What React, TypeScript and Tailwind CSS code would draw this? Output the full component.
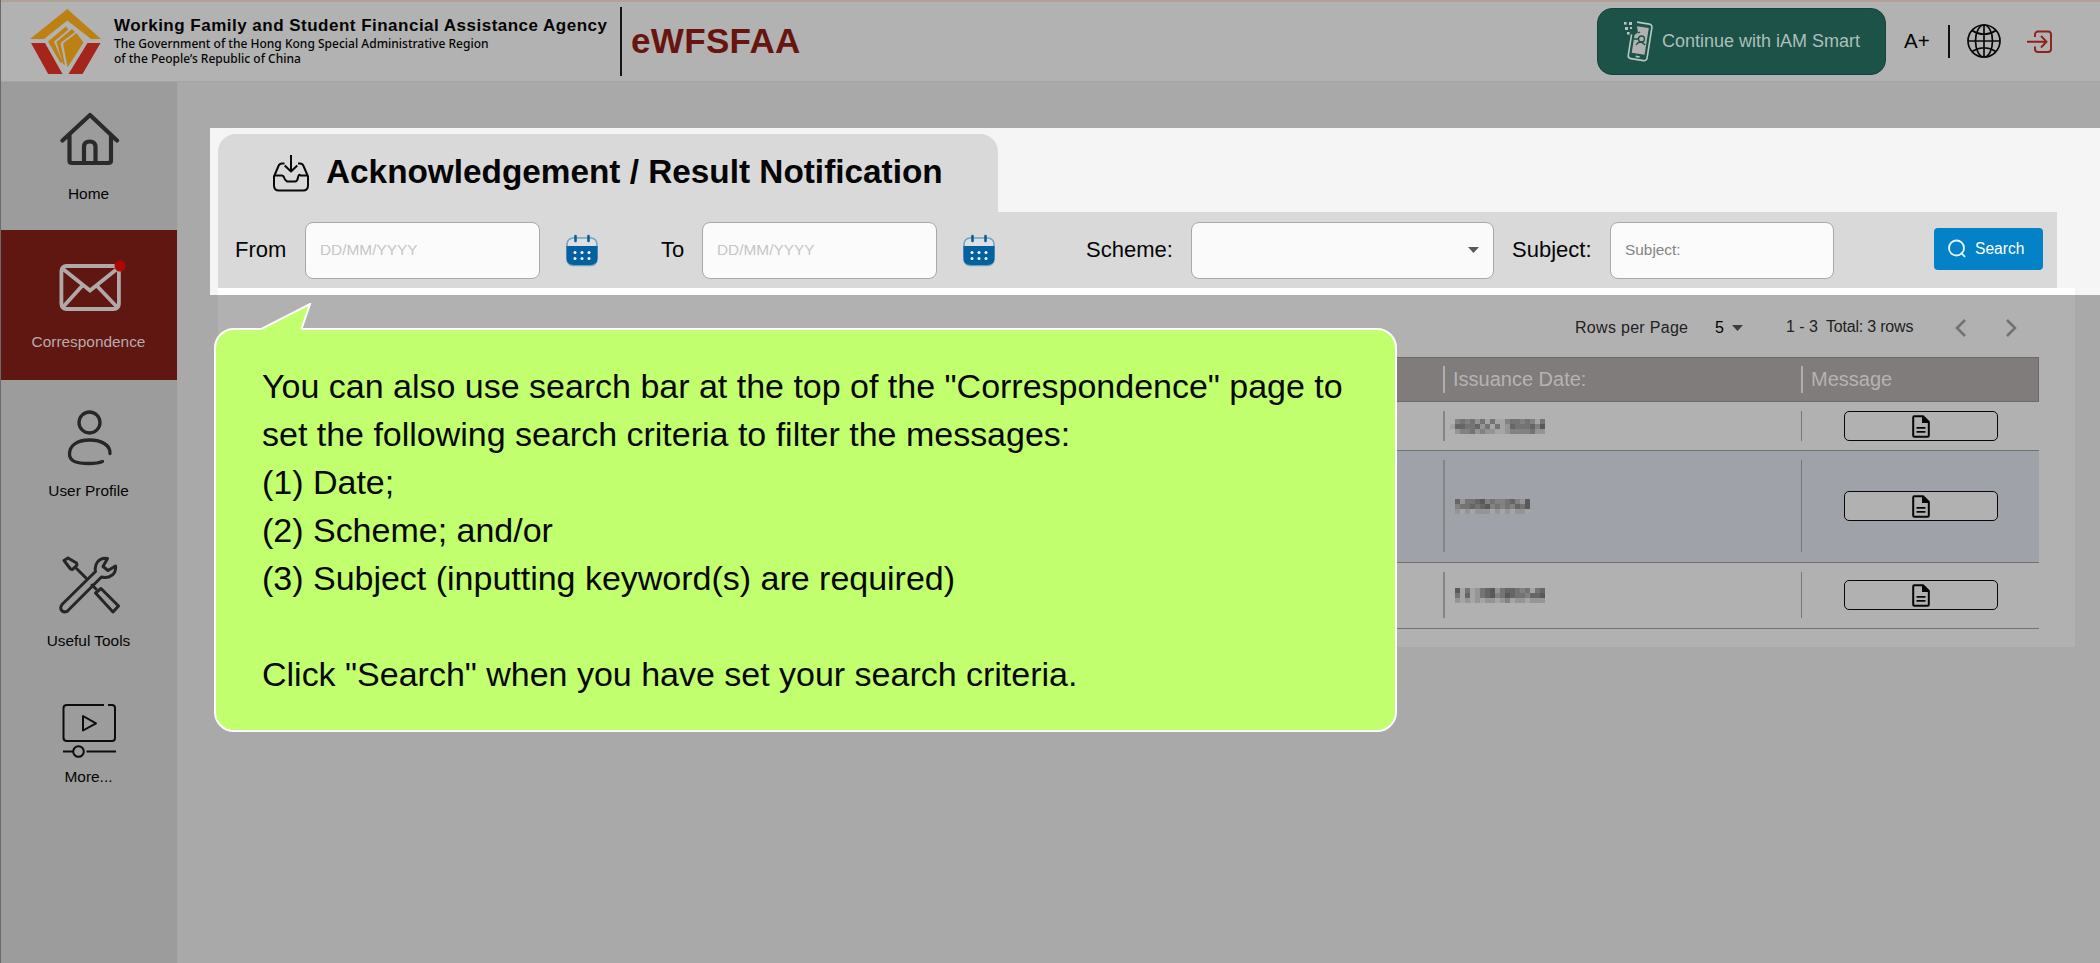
import React from "react";

function AgencyLogo() {
  return (
    <svg width="73" height="66" viewBox="0 0 73 66" className="block">
      <path d="M38.300 0 72 30H62L38.300 11.500 15 30H1Z" fill="#bd8113" />
      <path d="M2 34H16L33.500 65H19.200Z" fill="#a5241b" />
      <path d="M71.500 34H58.500L39.500 65H53.500Z" fill="#a5241b" />
      <path d="M19 32.500 37 17.500 39.500 20.500 25 32.500 33.500 53 31.500 54Z" fill="#bd8113" />
      <path d="M27.500 33 43 20 46 23 31.500 34 36 56 34 55Z" fill="#bd8113" />
      <path d="M34 34.500 47.500 24 54.500 33.500 38.500 58.500Z" fill="#bd8113" />
    </svg>
  );
}

function PhoneIcon() {
  return (
    <svg width="30" height="42" viewBox="0 0 30 42" className="block shrink-0" fill="none" stroke="#b4c8c1" strokeWidth="1.600">
      <g transform="rotate(9 18 21)">
        <path d="M11 2H23.500a3 3 0 0 1 3 3V36a3 3 0 0 1-3 3H10.500a3 3 0 0 1-3-3V15" />
        <path d="M11.500 6H23.500V33H10.500V15l3-3z" fill="#b2b2b2" stroke="none" />
        <path d="M15 36H19" />
      </g>
      <g stroke="#1c5045" strokeWidth="1.300">
        <circle cx="18.500" cy="18" r="3" />
        <path d="M13 24q4-6 9 0M11 18h4M15 12l2-1" />
      </g>
      <g fill="#b4c8c1" stroke="none">
        <rect x="1" y="1" width="2.600" height="2.600" />
        <rect x="6" y="1" width="3" height="3" />
        <rect x="2" y="6" width="3" height="3" />
        <rect x="7" y="6" width="2" height="2" />
        <rect x="4" y="11" width="2.600" height="2.600" />
      </g>
    </svg>
  );
}

function GlobeIcon() {
  return (
    <svg width="34" height="34" viewBox="0 0 34 34" className="block" fill="none" stroke="#080808" strokeWidth="1.700">
      <circle cx="17" cy="17" r="16" />
      <ellipse cx="17" cy="17" rx="8.500" ry="16" />
      <path d="M17 1V33M1 17H33M5 6.500Q17 14 29 6.500M5 27.500Q17 20 29 27.500" />
    </svg>
  );
}

function LogoutIcon() {
  return (
    <svg width="26" height="24" viewBox="0 0 26 24" className="block" fill="none" stroke="#8d211b" strokeWidth="1.900">
      <path d="M8 7V4.500A3 3 0 0 1 11 1.500H21A3 3 0 0 1 24 4.500V19A3 3 0 0 1 21 22H11A3 3 0 0 1 8 19V16.500" />
      <path d="M0 11.700H19M14 6 19.500 11.700 14 17.500" />
    </svg>
  );
}

function HomeIcon() {
  return (
    <svg width="60" height="54" viewBox="0 0 60 54" className="block" fill="none" stroke="#2a2a2a" strokeWidth="4.200" strokeLinejoin="round" strokeLinecap="round">
      <path d="M2.500 28.500 30 3 57 28.500M9.500 23V48.500Q9.500 51 12 51H48Q51 51 51 48.500V23" />
      <path d="M24 51V35Q24 29.500 29.700 29.500T35.500 35V51" />
    </svg>
  );
}

function MailIcon() {
  return (
    <svg width="62" height="52" viewBox="0 0 62 52" className="block overflow-visible" fill="none" stroke="#b1a9a9" strokeWidth="3.800">
      <rect x="2.400" y="6" width="57.500" height="43" rx="5" />
      <path d="M4 9 31 30.500 58 9M4 47 23 26M58 47 38 26" />
      <circle cx="61" cy="6" r="5.500" fill="#b00606" stroke="none" />
    </svg>
  );
}

function ProfileIcon() {
  return (
    <svg width="46" height="56" viewBox="0 0 46 56" className="block" fill="none" stroke="#262626" strokeWidth="3.300" strokeLinecap="round">
      <circle cx="22.500" cy="12.500" r="10.500" />
      <path d="M43 43.500C43.500 35.500 35 30 22.500 30 9.500 30 2.500 36 2.500 44 2.500 51 8.500 53.500 22 53.500 28 53.500 32 53 35.500 51.500" />
    </svg>
  );
}

function ToolsIcon() {
  return (
    <svg width="61" height="58" viewBox="0 0 61 58" className="block" fill="none" stroke="#262626" strokeWidth="3" strokeLinejoin="round" strokeLinecap="round">
      <path d="M48.500 2.500C40 1 35 8 36.500 15.500L3 48.500C0 53 3 57 8 55.500L42.500 21C50.500 23 57.500 18 56.500 10L49 14.500 44 10.500Z" />
      <path d="M5 4.500 9 2 17.500 7 18 9 13.500 13.500 11.500 13Z M16 11 27 22M33 29 37 33" />
      <path d="M36.500 37 42 32.500 59.500 50 54 56Z" />
    </svg>
  );
}

function VideoIcon() {
  return (
    <svg width="55" height="56" viewBox="0 0 55 56" className="block" fill="none" stroke="#0c0c0c" strokeWidth="2" strokeLinejoin="round">
      <path d="M42 2H5Q1.500 2 1.500 5V35Q1.500 38 5 38H50Q53 38 53 35V5Q53 2 50 2H46" />
      <path d="M21 13V27.500L34 20.300ZM1 48.500H11M24.500 48.500H54" />
      <circle cx="16.500" cy="48.500" r="5.300" />
    </svg>
  );
}

function InboxIcon() {
  return (
    <svg width="38" height="37" viewBox="0 0 38 37" className="block" fill="none" stroke="#080808" strokeWidth="2" strokeLinejoin="round">
      <path d="M12.500 8.500H10Q7.500 8.500 6.500 11L2 21.500V30.500Q2 35.500 7 35.500H31Q36 35.500 36 30.500V21.500L31.500 11Q30.500 8.500 28 8.500H26" />
      <path d="M2 20.500H9.500Q11.500 20.500 12 22.500T15 26.500H23Q25.300 26.500 26 22.500T28.500 20.500H36M19 0V16M12.700 10.500 19 16.500 25.300 10.500" />
    </svg>
  );
}

function CalendarIcon() {
  return (
    <svg width="32" height="33" viewBox="0 0 32 33" className="block">
      <rect x="1" y="4" width="30" height="27.500" rx="6" fill="#dce0e2" stroke="#6fa3c2" strokeWidth="1.600" />
      <path d="M0.500 12H31.500V24Q31.500 31 24.500 31H7.500Q.5 31 .5 24Z" fill="#04609f" />
      <path d="M9.500 2V7M22.500 2V7" stroke="#0d5d94" strokeWidth="2.600" strokeLinecap="round" />
      <g fill="#f0f5f8">
        <circle cx="9" cy="18.500" r="1.500" /><circle cx="16" cy="18.500" r="1.500" /><circle cx="23" cy="18.500" r="1.500" />
        <circle cx="9" cy="24.500" r="1.500" /><circle cx="16" cy="24.500" r="1.500" /><circle cx="23" cy="24.500" r="1.500" />
      </g>
    </svg>
  );
}

function Caret({ color }: { color: string }) {
  return (
    <svg width="11" height="6" viewBox="0 0 11 6" className="block shrink-0">
      <path d="M0 0H11L5.500 6Z" fill={color} />
    </svg>
  );
}

function DocIcon() {
  return (
    <svg width="18" height="23" viewBox="0 0 18 23" className="block">
      <path d="M1.200 2.200Q1.200 1.200 2.200 1.200H11L16.800 7V20.500Q16.800 21.700 15.600 21.700H2.400Q1.200 21.700 1.200 20.500Z" fill="none" stroke="#060606" strokeWidth="2" />
      <path d="M10 1H11.500L17 6.500V8H10ZM4.500 12H13.500V13.800H4.500ZM4.500 16H13.500V17.800H4.500Z" fill="#060606" />
    </svg>
  );
}

const shades: Record<string, string> = {
  a: "#a5a5a5", b: "#959595", c: "#828282", d: "#747474", e: "#666666", f: "#595959",
};

function RedactedValue({ rows }: { rows: string[] }) {
  return (
    <svg width="95" height="15" viewBox="0 0 95 15" className="block" shapeRendering="crispEdges">
      {rows.map((r, y) =>
        r.split("").map((c, x) =>
          shades[c] ? <rect key={`${x}-${y}`} x={x * 5} y={y * 5} width="5" height="5" fill={shades[c]} /> : null
        )
      )}
    </svg>
  );
}

function NavItem({ icon, label, className }: { icon: React.ReactNode; label: string; className: string }) {
  return (
    <a className={`flex flex-col items-center pl-px text-[15.4px] leading-[18px] ${className}`}>
      {icon}
      <span className="mt-auto mr-[2px]">{label}</span>
    </a>
  );
}

const messages = [
  { h: "h-[49px]", bg: "", pad: "pt-[9px] pb-[9px]", value: [".cdcdbdadaacddcdcad", "aeeddebdadabedddecff", ".bccdbcbbaabccccdbbd"] },
  { h: "h-[112px]", bg: "bg-[#9fa3a9]", pad: "pt-[9px] pb-[10px]", value: [".ebddefcdccdecbf", ".cddedefcdcdcedf", ".bababbbabababba"] },
  { h: "h-[66px]", bg: "", pad: "pt-[9px] pb-[10px]", value: [".fadabdefbdeedcdade", ".daeabdefcdfeddceef", ".babababbabcabbabbb"] },
];

export default function App() {
  return (
    <div className="relative flex h-[963px] w-[2100px] flex-col overflow-hidden border-l border-[#6b6b6b] bg-[#a9a9a9] font-['Liberation_Sans',Arial,sans-serif] text-[#050505]">
      <header className="flex h-[82px] shrink-0 border-t-2 border-b border-t-[#b3a196] border-b-[#a4a4a4] bg-[#b2b2b2] pl-7">
        <div className="w-[85px] pt-[7px]"><AgencyLogo /></div>
        <div className="w-[506px] whitespace-nowrap pt-[13px]">
          <div className="text-[17px] leading-[21px] font-bold tracking-[0.49px]">Working Family and Student Financial Assistance Agency</div>
          <div className="font-['Noto_Sans',sans-serif] text-[12px] leading-[15px] font-medium tracking-[0.01px]">
            The Government of the Hong Kong Special Administrative Region<br />of the People’s Republic of China
          </div>
        </div>
        <div className="mt-[5px] h-[69px] w-[2px] bg-[#151515]" />
        <div className="ml-[9px] pt-[18px] text-[35px] leading-[42px] font-bold tracking-[0.35px] text-[#68140f]">eWFSFAA</div>
        <div className="mt-[6px] ml-auto flex h-[67px] w-[289px] items-center rounded-[15px] border border-[#14453a] bg-[#1c5247] pl-[25px] text-[18px] text-[#adbfba]">
          <PhoneIcon />
          <span className="ml-[9px] whitespace-nowrap">Continue with iAM Smart</span>
        </div>
        <div className="ml-[18px] flex h-[78px] items-center">
          <span className="mt-px w-[44px] text-[20.5px]">A+</span>
          <span className="h-[33px] w-[2px] bg-[#111]" />
          <span className="ml-[17px]"><GlobeIcon /></span>
          <span className="mt-px mr-[47px] ml-[26px]"><LogoutIcon /></span>
        </div>
      </header>

      <div className="flex flex-1">
        <nav className="flex w-[177px] flex-col border-r border-[#a6a6a6] bg-[#9c9c9c]">
          <NavItem icon={<HomeIcon />} label="Home" className="h-[148px] pt-[30px] pb-[27px]" />
          <NavItem icon={<MailIcon />} label="Correspondence" className="h-[150px] bg-[#601712] pt-[30px] pb-[29px] text-[#b7abab]" />
          <NavItem icon={<ProfileIcon />} label="User Profile" className="h-[149px] pt-[30px] pb-[29px]" />
          <NavItem icon={<ToolsIcon />} label="Useful Tools" className="h-[149px] pt-[27px] pb-[28px]" />
          <NavItem icon={<VideoIcon />} label="More..." className="h-[136px] pt-[25px] pb-[28px]" />
        </nav>

        <main className="flex flex-1 flex-col pt-[46px] pl-[32px]">
          <section className="flex h-[167px] flex-col bg-[#f5f5f5] pt-[6px] pl-2">
            <div className="flex h-[78px] w-[780px] rounded-t-[18px] bg-[#d9d9d9] pt-[15px] pl-[54px]">
              <div className="mt-[6px]"><InboxIcon /></div>
              <h1 className="ml-[16px] text-[33.35px] leading-[46px] font-bold whitespace-nowrap">Acknowledgement / Result Notification</h1>
            </div>
            <div className="flex h-[76px] w-[1839px] items-center bg-[#d9d9d9] pl-[17px] text-[22px] whitespace-nowrap">
              <label className="-mt-[2px] w-[70px]">From</label>
              <div className="flex h-[57px] w-[235px] items-center rounded-lg border border-[#a9a9a9] bg-[#fbfbfb] pl-[14px] text-[15.4px] text-[#c6c6c6]">DD/MM/YYYY</div>
              <div className="mr-[63px] ml-[26px]"><CalendarIcon /></div>
              <label className="-mt-[2px] w-[41px]">To</label>
              <div className="flex h-[57px] w-[235px] items-center rounded-lg border border-[#a9a9a9] bg-[#fbfbfb] pl-[14px] text-[15.4px] text-[#c6c6c6]">DD/MM/YYYY</div>
              <div className="mr-[91px] ml-[26px]"><CalendarIcon /></div>
              <label className="-mt-[2px] w-[105px]">Scheme:</label>
              <div className="flex h-[57px] w-[303px] items-center justify-end rounded-lg border border-[#a9a9a9] bg-[#fafafa] pr-[14px]"><Caret color="#5a5a5a" /></div>
              <label className="-mt-[2px] ml-[18px] w-[98px]">Subject:</label>
              <div className="flex h-[57px] w-[224px] items-center rounded-lg border border-[#a9a9a9] bg-[#fbfbfb] pl-[14px] text-[15.4px] text-[#858585]">Subject:</div>
              <button className="-mt-[2px] ml-[100px] flex h-[42px] w-[109px] items-center rounded-[4px] bg-[#0482c8] pl-[14px] text-[15.6px] text-white">
                <svg width="18" height="20" viewBox="0 0 18 20" fill="none" stroke="#e8f6ff" strokeWidth="1.800"><circle cx="8.500" cy="9" r="7.500" /><path d="M13 13.500 17 18" /></svg>
                <span className="ml-[9px]">Search</span>
              </button>
            </div>
            <div className="h-[7px] w-[1857px] bg-white" />
          </section>

          <section className="ml-2 h-[352px] w-[1857px] bg-[#b1b1b1] pr-9">
            <div className="flex h-[62px] items-center pl-[1357px] text-[16px] whitespace-nowrap text-[#222]">
              <span className="w-[140px] pt-[4px] tracking-[0.3px]">Rows per Page</span>
              <span className="w-[17px] pt-[3px] text-black">5</span>
              <span className="w-[54px] pt-[3px]"><Caret color="#3e3e3e" /></span>
              <span className="w-[40px] pt-[2px]">1 - 3</span>
              <span className="w-[128px] pt-[2px] tracking-[-0.2px]">Total: 3 rows</span>
              <svg width="64" height="18" viewBox="0 0 64 18" className="mt-[3px] block" fill="none" stroke="#727272" strokeWidth="2.500"><path d="M11 1 3 9 11 17M53 1 61 9 53 17" /></svg>
            </div>
            <div className="flex h-[45px] items-center border border-[#6c6a69] bg-[#807c7b] pl-[1224px] text-[20px] text-[#b5b3b3]">
              <div className="flex h-[27px] w-[358px] items-center border-l-2 border-[#b0aeae] pb-[2px] pl-[8px]">Issuance Date:</div>
              <div className="flex h-[27px] items-center border-l-2 border-[#b0aeae] pb-[2px] pl-[8px]">Message</div>
            </div>
            {messages.map((m, i) => (
              <div key={i} className={`flex border-b border-[#727272] pl-[1225px] ${m.h} ${m.bg} ${m.pad}`}>
                <div className="flex w-[358px] items-center border-l-2 border-[#858585] pl-[5px]"><RedactedValue rows={m.value} /></div>
                <div className="flex flex-1 items-center border-l border-[#777] pl-[42px]">
                  <button className="flex h-[30px] w-[154px] items-center justify-center rounded-[5px] border border-[#080808] bg-[#b1b1b1]"><DocIcon /></button>
                </div>
              </div>
            ))}
          </section>
        </main>
      </div>

      <aside className="absolute top-[328px] left-[213px] h-[404px] w-[1183px] rounded-[20px] border-2 border-white bg-[#c1ff6f] pt-[32px] pl-[46px] text-[34px] leading-[48px] tracking-[-0.01px] whitespace-pre text-[#080808]">
        <svg width="52" height="29" viewBox="0 0 52 29" className="absolute -top-[27px] left-[45px]">
          <path d="M0 26 49 1 41 26V29H0Z" fill="#c1ff6f" />
          <path d="M0 26 49 1 40.500 26" fill="none" stroke="#fff" strokeWidth="2" />
        </svg>
        <p>You can also use search bar at the top of the "Correspondence" page to</p>
        <p>set the following search criteria to filter the messages:</p>
        <p>(1) Date;</p>
        <p>(2) Scheme; and/or</p>
        <p>(3) Subject (inputting keyword(s) are required)</p>
        <p> </p>
        <p>Click "Search" when you have set your search criteria.</p>
      </aside>
    </div>
  );
}
